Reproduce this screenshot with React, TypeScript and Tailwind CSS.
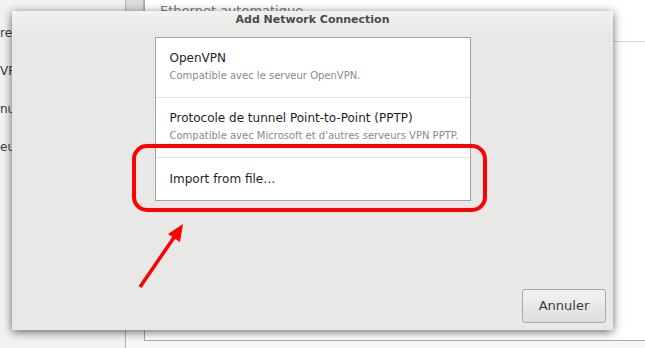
const rows = [
  { title: "OpenVPN", sub: "Compatible avec le serveur OpenVPN." },
  {
    title: "Protocole de tunnel Point-to-Point (PPTP)",
    sub: "Compatible avec Microsoft et d'autres serveurs VPN PPTP.",
  },
];

const sideItems = ["re", "VPN", "nu", "eur"];

export default function App() {
  return (
    <div className="relative w-[645px] h-[348px] overflow-hidden bg-[#f7f7f7] font-['DejaVu_Sans',sans-serif] text-[#3c3c3c]">
      {/* settings window behind the dialog */}
      <div className="flex h-full">
        <div className="w-[126px] border-r border-[#b5b5b5] bg-[#f2f2f2] pt-[26px] flex flex-col gap-[24px] text-[12px]">
          {sideItems.map((s) => (
            <div key={s} className="h-[14px] leading-[14px] whitespace-nowrap">{s}</div>
          ))}
        </div>
        <div className="flex-1 flex flex-col pb-[7px]">
          <div className="flex flex-1">
            <div className="w-[18px] flex flex-col">
              <div className="h-[11px] bg-[#dcdcdc] border-r border-[#b5b5b5]" />
            </div>
            <div className="flex-1 border-l border-b border-[#a8a8a8] bg-white">
              <div className="h-[42px] border-b border-[#d8d8d8] pl-[15px] pt-[1px] text-[13px] text-[#7a7a7a]">
                Ethernet automatique
              </div>
            </div>
          </div>
        </div>
      </div>

      {/* dialog window */}
      <div className="absolute left-[12px] top-[11px] w-[601px] h-[319px] bg-[#e8e8e7] shadow-[0_2px_9px_rgba(0,0,0,0.6)] flex flex-col">
        <div className="h-[26px] bg-gradient-to-b from-[#f1f1f0] to-[#e8e8e7] flex justify-center pt-[2px]">
          <span className="text-[11px] leading-[14px] font-bold text-[#4b4b4b]">Add Network Connection</span>
        </div>
        <div className="flex justify-center">
          <div className="w-[316px] border border-[#a3a3a3] bg-white">
            {rows.map((r) => (
              <div key={r.title} className="h-[60px] border-b border-[#e1e1e1] pl-[14px] pt-[12px]">
                <div className="text-[12px] leading-[16px] text-[#1e1e1e]">{r.title}</div>
                <div className="mt-[3px] text-[10px] leading-[14px] text-[#8a8a8a] whitespace-nowrap">{r.sub}</div>
              </div>
            ))}
            <div className="h-[42px] pl-[14px] flex items-center text-[12px] text-[#1e1e1e]">
              Import from file…
            </div>
          </div>
        </div>
        <div className="flex-1" />
        <div className="flex justify-end pr-[7px] pb-[7px]">
          <button className="w-[84px] h-[34px] rounded-[3px] border border-[#a9a9a9] bg-gradient-to-b from-[#f3f3f3] to-[#dedede] text-[13px] text-[#3c3c3c]">
            Annuler
          </button>
        </div>
      </div>

      {/* red annotation */}
      <svg className="absolute inset-0 pointer-events-none" width="645" height="348" viewBox="0 0 645 348">
        <rect x="134" y="146" width="351" height="64" rx="13" fill="none" stroke="#ff0000" strokeWidth="4" />
        <line x1="140" y1="287" x2="175" y2="236" stroke="#ff0000" strokeWidth="3.5" />
        <polygon points="183,224 180,242 168,234" fill="#ff0000" />
      </svg>
    </div>
  );
}
